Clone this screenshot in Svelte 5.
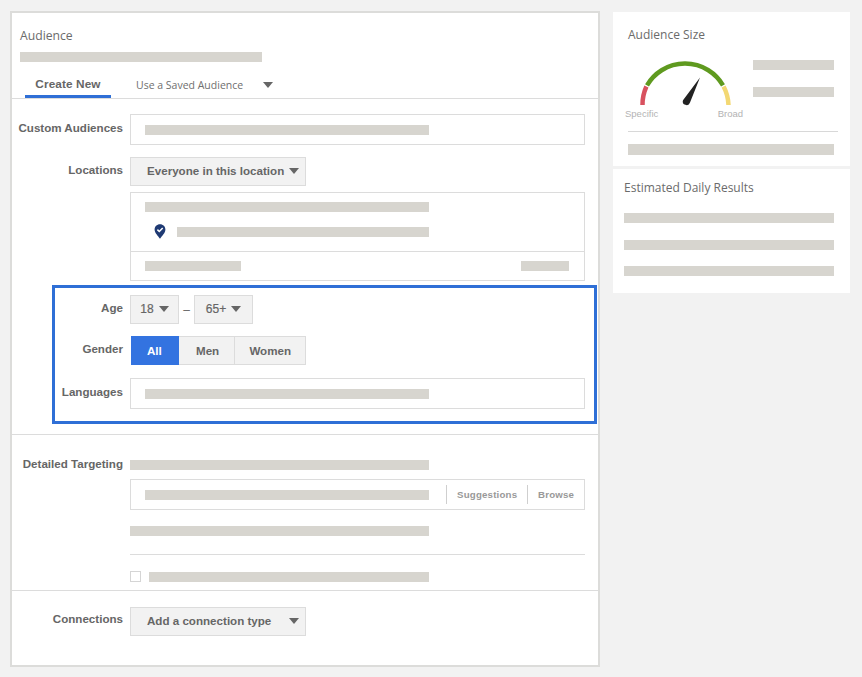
<script>
  const gender = ['All', 'Men', 'Women'];
</script>

<div class="page">
  <main class="panel">
    <header class="head">
      <h2>Audience</h2>
      <div class="bar w242 mt5"></div>
      <nav class="tabs">
        <span class="tab active">Create New</span>
        <span class="tab saved">Use a Saved Audience</span>
        <span class="caret saved-caret"></span>
      </nav>
    </header>

    <section class="row first">
      <div class="label l14">Custom Audiences</div>
      <div class="input"><div class="bar w284"></div></div>
    </section>

    <section class="row loc">
      <div class="label">Locations</div>
      <div>
        <div class="btn wide between">Everyone in this location <span class="caret"></span></div>
        <div class="locbox">
          <div class="locmain">
            <div class="bar w284"></div>
            <div class="pinrow">
              <svg class="pin" width="12" height="15" viewBox="0 0 12 15" aria-hidden="true">
                <path d="M6 0.3C2.8 0.3 0.6 2.6 0.6 5.5 0.6 8.8 4 12 6 14.7 8 12 11.4 8.8 11.4 5.5 11.4 2.6 9.2 0.3 6 0.3Z" fill="#1f3a73"/>
                <path d="M3.4 5.6 5.3 7.5 8.7 3.9" fill="none" stroke="#fff" stroke-width="1.5"/>
              </svg>
              <div class="bar w252"></div>
            </div>
          </div>
          <div class="locfoot">
            <div class="bar w96"></div>
            <div class="bar w48"></div>
          </div>
        </div>
      </div>
    </section>

    <section class="highlight">
      <div class="row">
        <div class="label">Age</div>
        <div class="ages">
          <div class="btn age1">18 <span class="caret"></span></div>
          <span class="dash">–</span>
          <div class="btn age2">65+ <span class="caret"></span></div>
        </div>
      </div>
      <div class="row genderrow">
        <div class="label">Gender</div>
        <div class="segs">
          {#each gender as g, i}
            <span class="seg" class:on={i === 0}>{g}</span>
          {/each}
        </div>
      </div>
      <div class="row langrow">
        <div class="label l14">Languages</div>
        <div class="input"><div class="bar w284"></div></div>
      </div>
    </section>

    <section class="detailed">
      <div class="row">
        <div class="label dl">Detailed Targeting</div>
        <div>
          <div class="bar w298"></div>
          <div class="input sugg">
            <div class="bar w284"></div>
            <div class="links">
              <span class="link l1">Suggestions</span>
              <span class="link l2">Browse</span>
            </div>
          </div>
          <div class="bar w298 mt16"></div>
          <div class="hr"></div>
          <div class="checkrow">
            <span class="check"></span>
            <div class="bar w280"></div>
          </div>
        </div>
      </div>
    </section>

    <section class="connections">
      <div class="row">
        <div class="label c">Connections</div>
        <div class="btn wide between">Add a connection type <span class="caret"></span></div>
      </div>
    </section>
  </main>

  <aside class="side">
    <div class="card size">
      <h3>Audience Size</h3>
      <div class="gaugewrap">
        <div class="gauge">
          <svg width="120" height="60" viewBox="0 0 120 60" aria-hidden="true">
            <g fill="none" stroke-width="4.5">
              <path d="M16.5 46A44 44 0 0 1 20.4 27.5" stroke="#d8515f"/>
              <path d="M21 26.4A44 44 0 0 1 97 26.4" stroke="#5f9a1f"/>
              <path d="M97.6 27.5A44 44 0 0 1 102.5 46" stroke="#f3d873"/>
            </g>
            <path d="M74 18.5 64 43.5A3.6 3.6 0 0 1 57 41.2Z" fill="#222"/>
          </svg>
          <div class="scale"><span>Specific</span><span>Broad</span></div>
        </div>
        <div class="gaugebars">
          <div class="bar w81"></div>
          <div class="bar w81"></div>
        </div>
      </div>
      <div class="cardhr"></div>
      <div class="bar w206 tall"></div>
    </div>

    <div class="card est">
      <h3>Estimated Daily Results</h3>
      <div class="bar w210 e1"></div>
      <div class="bar w210 e2"></div>
      <div class="bar w210 e3"></div>
    </div>
  </aside>
</div>

<style>
  :global(body) {
    margin: 0;
    background: #f2f2f2;
  }
  .page {
    display: flex;
    align-items: flex-start;
    gap: 13px;
    width: 862px;
    height: 677px;
    padding: 11px 0 0 10px;
    box-sizing: border-box;
    overflow: hidden;
    font-family: "Liberation Sans", Arial, sans-serif;
    color: #666;
    background: #f2f2f2;
  }
  .panel {
    width: 590px;
    height: 656px;
    box-sizing: border-box;
    background: #fff;
    border: 2px solid #dcdcda;
    flex: none;
  }
  h2, h3 {
    margin: 0;
    font-family: "Open Sans", sans-serif;
    font-weight: 400;
    font-size: 12.2px;
    line-height: 22px;
    color: #6b6b6b;
  }
  h3 { font-size: 12px; }
  .head {
    padding: 12px 0 0 0;
    border-bottom: 1px solid #dcdcdc;
  }
  .head h2 { padding-left: 8px; }
  .head .bar { margin-left: 8px; }

  .bar {
    height: 10px;
    background: #d7d5cf;
    flex: none;
  }
  .w242 { width: 242px; }
  .w284 { width: 284px; }
  .w252 { width: 252px; }
  .w96 { width: 96px; }
  .w48 { width: 48px; }
  .w298 { width: 299px; }
  .w280 { width: 280px; }
  .w81 { width: 81px; }
  .w206 { width: 206px; }
  .w210 { width: 210px; }
  .mt5 { margin-top: 5px; }
  .mt16 { margin-top: 16px; }

  .tabs {
    display: flex;
    align-items: flex-start;
    margin: 12px 0 0 13px;
    height: 24px;
  }
  .tab {
    font-size: 11.8px;
    line-height: 21px;
    box-sizing: border-box;
    height: 24px;
  }
  .tab.active {
    width: 86px;
    text-align: center;
    font-weight: 700;
    letter-spacing: 0.1px;
    color: #666;
    border-bottom: 3px solid #2f6fd6;
  }
  .tab.saved {
    margin-left: 25px;
    font-family: "Open Sans", sans-serif;
    font-size: 10.5px;
    line-height: 22px;
    color: #6f6f6f;
  }
  .saved-caret { margin: 8px 0 0 20px; }

  .caret {
    display: inline-block;
    width: 0;
    height: 0;
    border-left: 5px solid transparent;
    border-right: 5px solid transparent;
    border-top: 6px solid #666;
    flex: none;
  }

  .row {
    display: grid;
    grid-template-columns: 111px 455px;
    column-gap: 7px;
    align-items: start;
  }
  .first { margin-top: 15px; }
  .loc { margin-top: 12px; }
  .label {
    font-size: 11.6px;
    font-weight: 700;
    line-height: 26px;
    text-align: right;
    color: #666;
    white-space: nowrap;
  }
  .l14 { line-height: 28px; }
  .input {
    box-sizing: border-box;
    height: 31px;
    border: 1px solid #dcdcdc;
    padding: 10px 0 0 14px;
    background: #fff;
  }
  .btn {
    box-sizing: border-box;
    display: flex;
    align-items: center;
    height: 29px;
    padding-bottom: 2px;
    background: #f2f2f2;
    border: 1px solid #dcdcdc;
    font-size: 11.6px;
    font-weight: 700;
    color: #666;
    white-space: nowrap;
  }
  .wide {
    width: 176px;
    padding-left: 16px;
    gap: 5px;
  }
  .between { justify-content: space-between; padding-right: 6px; }
  .locbox {
    box-sizing: border-box;
    margin-top: 6px;
    height: 89px;
    border: 1px solid #dcdcdc;
  }
  .locmain {
    height: 59px;
    box-sizing: border-box;
    padding: 9px 0 0 14px;
    border-bottom: 1px solid #dcdcdc;
  }
  .pinrow {
    display: flex;
    align-items: center;
    margin-top: 12px;
  }
  .pin { margin-left: 9px; margin-right: 11px; flex: none; }
  .locfoot {
    display: flex;
    justify-content: space-between;
    padding: 9px 15px 0 14px;
  }

  .highlight {
    box-sizing: border-box;
    width: 545px;
    height: 139px;
    margin: 4px 0 0 40px;
    border: 3px solid #2f6fd6;
    padding: 7px 0 0;
  }
  .highlight .row { grid-template-columns: 68px 455px; }
  .ages { display: flex; align-items: center; }
  .age1, .age2 {
    height: 29px;
    justify-content: center;
    gap: 5px;
    font-weight: 400;
    font-size: 12px;
    -webkit-text-stroke: 0.2px #666;
  }
  .age1 { width: 49px; }
  .age2 { width: 59px; }
  .dash { width: 15px; text-align: center; font-size: 12px; color: #666; }
  .genderrow { margin-top: 12px; }
  .langrow { margin-top: 13px; }
  .segs { display: flex; height: 29px; width: 176px; }
  .seg {
    box-sizing: border-box;
    display: flex;
    align-items: center;
    justify-content: center;
    padding-bottom: 1px;
    background: #f2f2f2;
    border: 1px solid #dcdcdc;
    border-left: 0;
    font-size: 11.6px;
    font-weight: 700;
    color: #666;
  }
  .seg:nth-child(1) { width: 48px; margin-left: 1px; }
  .seg:nth-child(2) { width: 57px; padding-left: 2px; }
  .seg:nth-child(3) { width: 71px; }
  .seg.on {
    background: #3373e0;
    border-color: #3373e0;
    color: #fff;
  }

  .detailed {
    margin-top: 10px;
    height: 157px;
    box-sizing: border-box;
    border-top: 1px solid #dcdcdc;
    border-bottom: 1px solid #dcdcdc;
    padding-top: 25px;
  }
  .dl { margin-top: -9px; }
  .sugg {
    margin-top: 9px;
    display: flex;
    justify-content: space-between;
  }
  .links {
    display: flex;
    align-self: center;
    margin-top: -10px;
    height: 19px;
    align-items: center;
  }
  .link {
    font-size: 9.7px;
    font-weight: 700;
    letter-spacing: 0.2px;
    color: #999;
    border-left: 1px solid #cfcfcf;
    height: 19px;
    line-height: 19px;
    box-sizing: border-box;
  }
  .l1 { width: 81px; padding-left: 10px; }
  .l2 { width: 57px; padding-left: 10px; }
  .hr {
    height: 1px;
    background: #dcdcdc;
    margin-top: 18px;
  }
  .checkrow {
    display: flex;
    align-items: center;
    gap: 8px;
    margin-top: 16px;
  }
  .check {
    box-sizing: border-box;
    width: 11px;
    height: 11px;
    border: 1px solid #d5d5d5;
    flex: none;
  }
  .connections { padding-top: 16px; }
  .c { line-height: 24px; }

  .side {
    display: flex;
    flex-direction: column;
    gap: 3px;
    width: 237px;
    margin-top: 1px;
    flex: none;
  }
  .card {
    background: #fff;
    box-sizing: border-box;
  }
  .size {
    height: 154px;
    padding: 12px 0 0 15px;
  }
  .gaugewrap { display: flex; }
  .gauge {
    width: 125px;
    margin-left: -3px;
    margin-top: 13px;
    flex: none;
  }
  .gauge svg { display: block; margin-left: 1px; }
  .scale {
    display: flex;
    justify-content: space-between;
    width: 118px;
    margin: -11px 0 0 0;
    font-size: 9.5px;
    line-height: 12px;
    color: #b3b3b3;
  }
  .gaugebars {
    display: flex;
    flex-direction: column;
    gap: 17px;
    padding-left: 3px;
    margin-top: 14px;
  }
  .cardhr {
    width: 210px;
    height: 1px;
    background: #d8d8d8;
    margin-top: 11px;
  }
  .tall { height: 11px; margin-top: 12px; }
  .est {
    height: 124px;
    padding: 8px 0 0 11px;
  }
  .e1 { margin-top: 14px; }
  .e2 { margin-top: 17px; }
  .e3 { margin-top: 16px; }
</style>
